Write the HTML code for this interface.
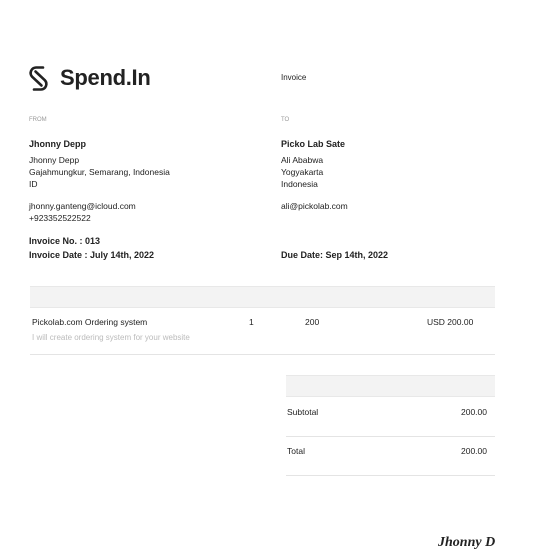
<html><head><style>
body{margin:0;width:546px;height:546px;background:#fff;font-family:"Liberation Sans",sans-serif;color:#222;position:relative;overflow:hidden}
.a{position:absolute;white-space:nowrap;font-size:8.5px;line-height:12px}
.b{font-weight:bold;font-size:9px}
.s{font-size:6px;color:#999}
.band{position:absolute;background:#f3f3f3;border-top:1px solid #e8e8e8;border-bottom:1px solid #e8e8e8}
.ln{position:absolute;height:1px;background:#e4e4e4}
</style></head><body>
<svg style="position:absolute;left:28px;top:65px" width="21" height="27" viewBox="0 0 21 27" fill="none" stroke="#222" stroke-width="2.6" stroke-linecap="round" stroke-linejoin="round"><path d="M15 2.5 H8 A5.5 5.5 0 0 0 4.2 11.8 L13.5 20.5"/><path d="M6 24.5 H13 A5.5 5.5 0 0 0 16.8 15.2 L7.5 6.5"/></svg>
<div class="a" style="left:60px;top:64px;font-size:22px;line-height:28px;font-weight:bold;color:#222;letter-spacing:-0.3px">Spend.In</div>
<div class="a" style="left:281px;top:72px;font-size:8px">Invoice</div>
<div class="a s" style="left:29px;top:114px">FROM</div>
<div class="a s" style="left:281px;top:114px">TO</div>
<div class="a b" style="left:29px;top:138px">Jhonny Depp</div>
<div class="a b" style="left:281px;top:138px">Picko Lab Sate</div>
<div class="a" style="left:29px;top:154px;line-height:12px">Jhonny Depp<br>Gajahmungkur, Semarang, Indonesia<br>ID</div>
<div class="a" style="left:281px;top:154px;line-height:12px">Ali Ababwa<br>Yogyakarta<br>Indonesia</div>
<div class="a" style="left:29px;top:200px;line-height:12px">jhonny.ganteng@icloud.com<br>+923352522522</div>
<div class="a" style="left:281px;top:200px">ali@pickolab.com</div>
<div class="a b" style="left:29px;top:235px">Invoice No. : 013</div>
<div class="a b" style="left:29px;top:249px">Invoice Date : July 14th, 2022</div>
<div class="a b" style="left:281px;top:249px">Due Date: Sep 14th, 2022</div>
<div class="band" style="left:30px;top:286px;width:465px;height:20px"></div>
<div class="a" style="left:32px;top:316px">Pickolab.com Ordering system</div>
<div class="a" style="left:249px;top:316px">1</div>
<div class="a" style="left:305px;top:316px">200</div>
<div class="a" style="left:427px;top:316px">USD 200.00</div>
<div class="a" style="left:32px;top:332px;color:#bbb;font-size:8px">I will create ordering system for your website</div>
<div class="ln" style="left:30px;top:354px;width:465px"></div>
<div class="band" style="left:286px;top:375px;width:209px;height:20px"></div>
<div class="a" style="left:287px;top:406px">Subtotal</div>
<div class="a" style="left:461px;top:406px">200.00</div>
<div class="ln" style="left:286px;top:436px;width:209px"></div>
<div class="a" style="left:287px;top:445px">Total</div>
<div class="a" style="left:461px;top:445px">200.00</div>
<div class="ln" style="left:286px;top:475px;width:209px"></div>
<div class="a" style="left:438px;top:535px;font-family:'Liberation Serif',serif;font-style:italic;font-weight:bold;font-size:14px;line-height:16px">Jhonny D</div>
</body></html>
